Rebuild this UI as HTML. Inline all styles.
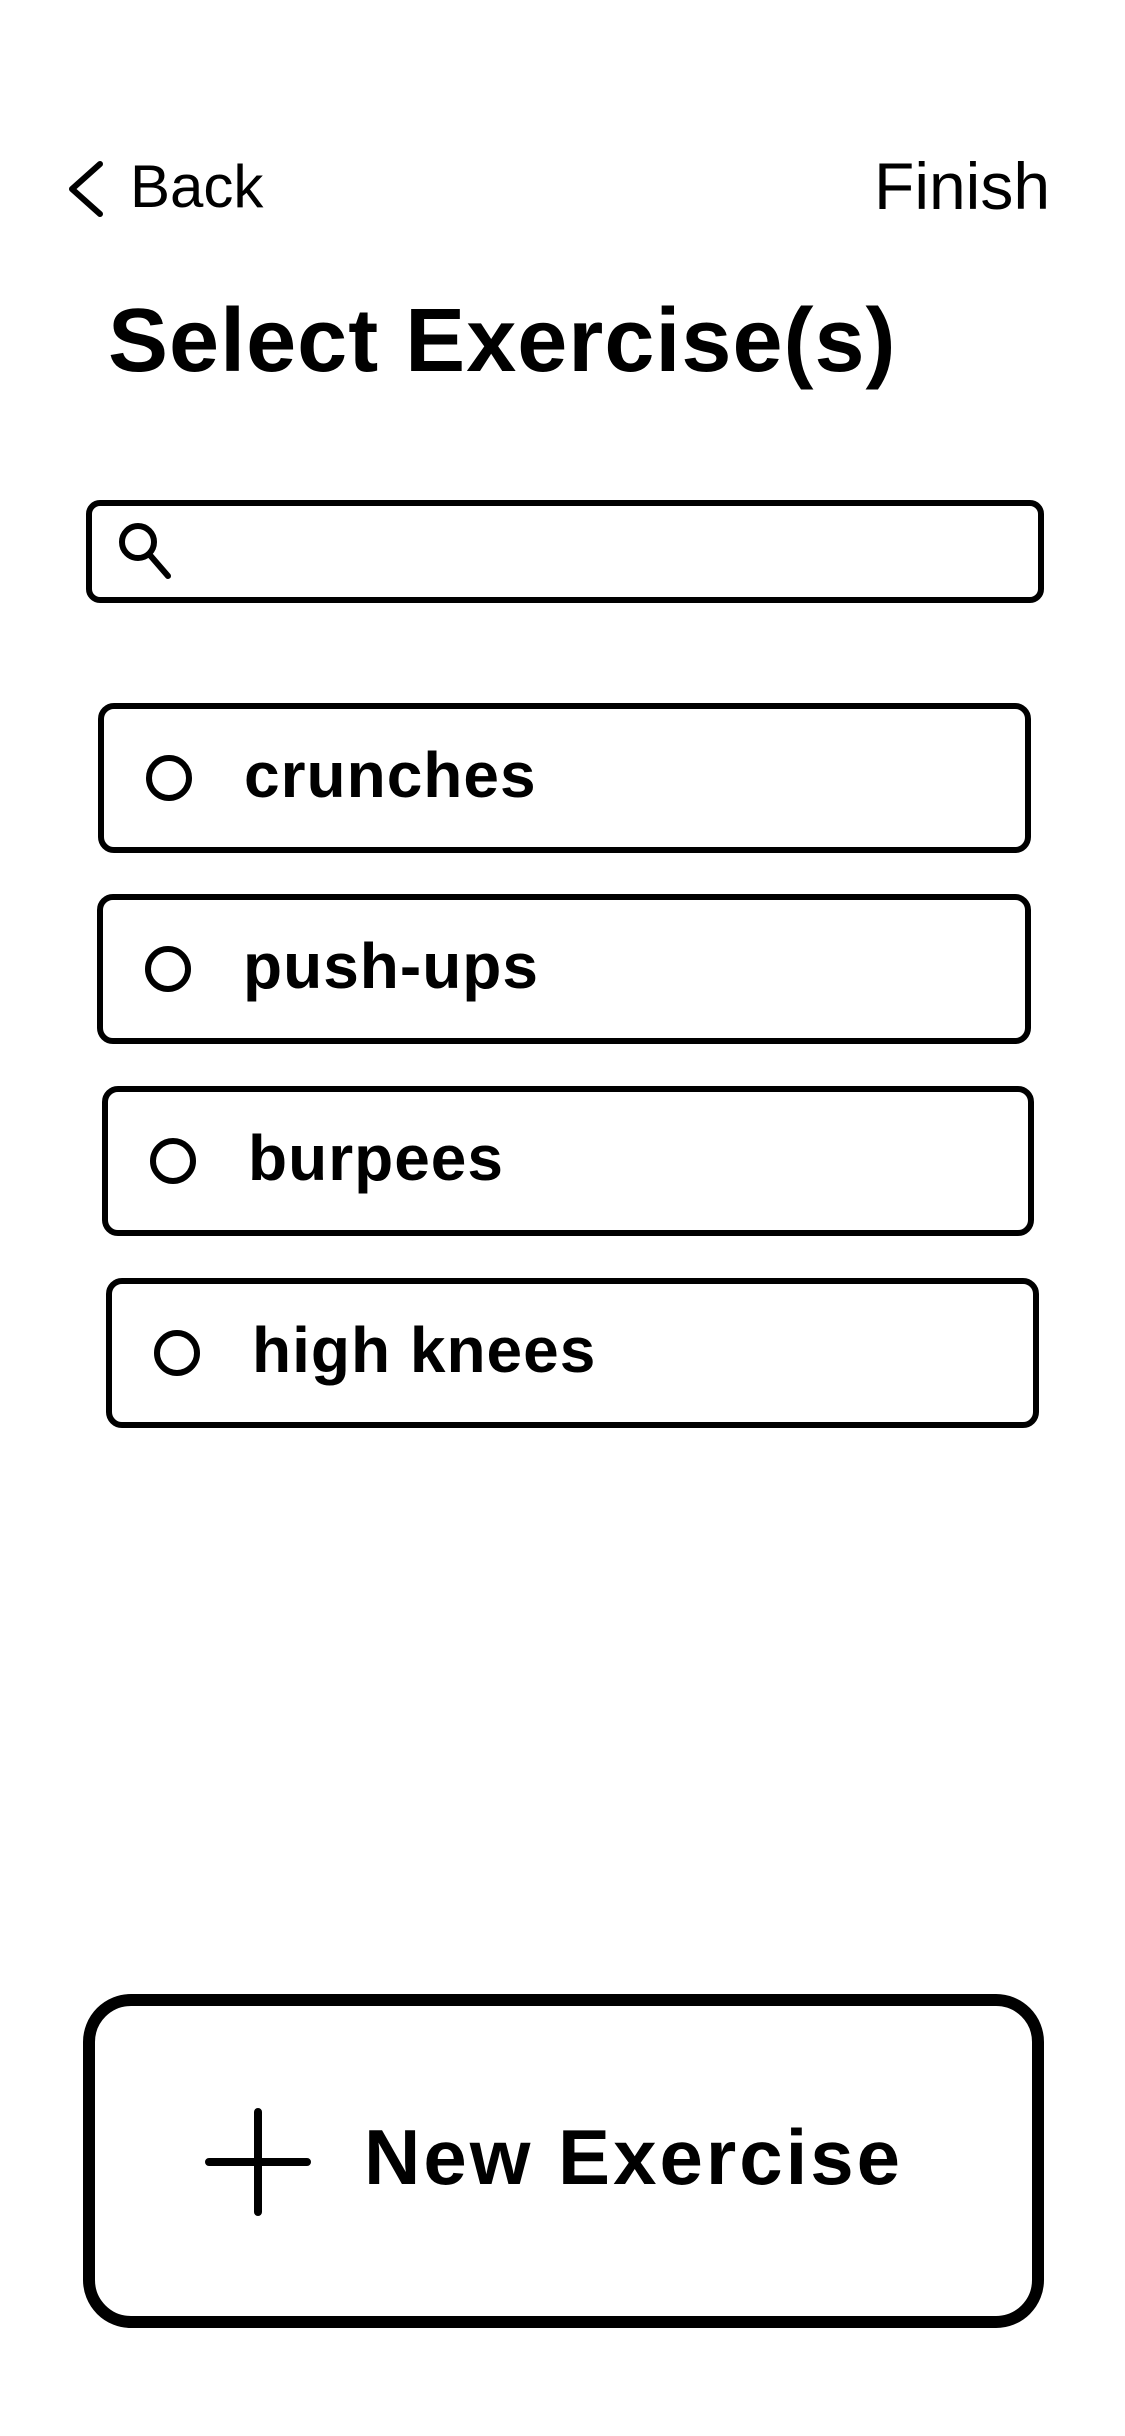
<!DOCTYPE html>
<html><head><meta charset="utf-8"><style>
html,body{margin:0;padding:0;background:#fff;}
body{width:1125px;height:2436px;position:relative;overflow:hidden;font-family:"Liberation Sans",sans-serif;color:#000;}
.abs{position:absolute;}
.item{position:absolute;border:6px solid #000;border-radius:16px;box-sizing:border-box;}
.item .c{position:absolute;left:42px;top:50%;margin-top:-23px;width:46px;height:46px;box-sizing:border-box;border:6px solid #000;border-radius:50%;}
.item .t{position:absolute;left:140px;top:50%;transform:translateY(-54%);font-size:64px;font-weight:bold;letter-spacing:1px;}
</style></head><body>
<svg class="abs" style="left:66px;top:160px" width="40" height="58" viewBox="0 0 40 58"><path d="M34 4 L6 29 L34 54" fill="none" stroke="#000" stroke-width="6" stroke-linecap="round" stroke-linejoin="round"/></svg>
<div class="abs" style="left:130px;top:152px;font-size:60px;">Back</div>
<div class="abs" style="left:874px;top:148px;font-size:66px;">Finish</div>
<div class="abs" style="left:108px;top:290px;font-size:90px;font-weight:bold;letter-spacing:1px;">Select Exercise(s)</div>
<div class="abs" style="left:86px;top:500px;width:958px;height:103px;border:6px solid #000;border-radius:14px;box-sizing:border-box;"></div>
<svg class="abs" style="left:112px;top:516px" width="66" height="66" viewBox="0 0 66 66"><circle cx="26" cy="26" r="16" fill="none" stroke="#000" stroke-width="6"/><path d="M37 38 L56 60" stroke="#000" stroke-width="6" stroke-linecap="round"/></svg>
<div class="item" style="left:98px;top:703px;width:933px;height:150px;"><div class="c"></div><div class="t">crunches</div></div>
<div class="item" style="left:97px;top:894px;width:934px;height:150px;"><div class="c"></div><div class="t">push-ups</div></div>
<div class="item" style="left:102px;top:1086px;width:932px;height:150px;"><div class="c"></div><div class="t">burpees</div></div>
<div class="item" style="left:106px;top:1278px;width:933px;height:150px;"><div class="c"></div><div class="t">high knees</div></div>
<div class="abs" style="left:83px;top:1994px;width:961px;height:334px;border:12px solid #000;border-radius:48px;box-sizing:border-box;"></div>
<svg class="abs" style="left:205px;top:2108px" width="106" height="108" viewBox="0 0 106 108"><path d="M53 4 V104 M4 54 H102" stroke="#000" stroke-width="8" stroke-linecap="round"/></svg>
<div class="abs" style="left:364px;top:2112px;font-size:78px;font-weight:bold;letter-spacing:3px;">New Exercise</div>
</body></html>
